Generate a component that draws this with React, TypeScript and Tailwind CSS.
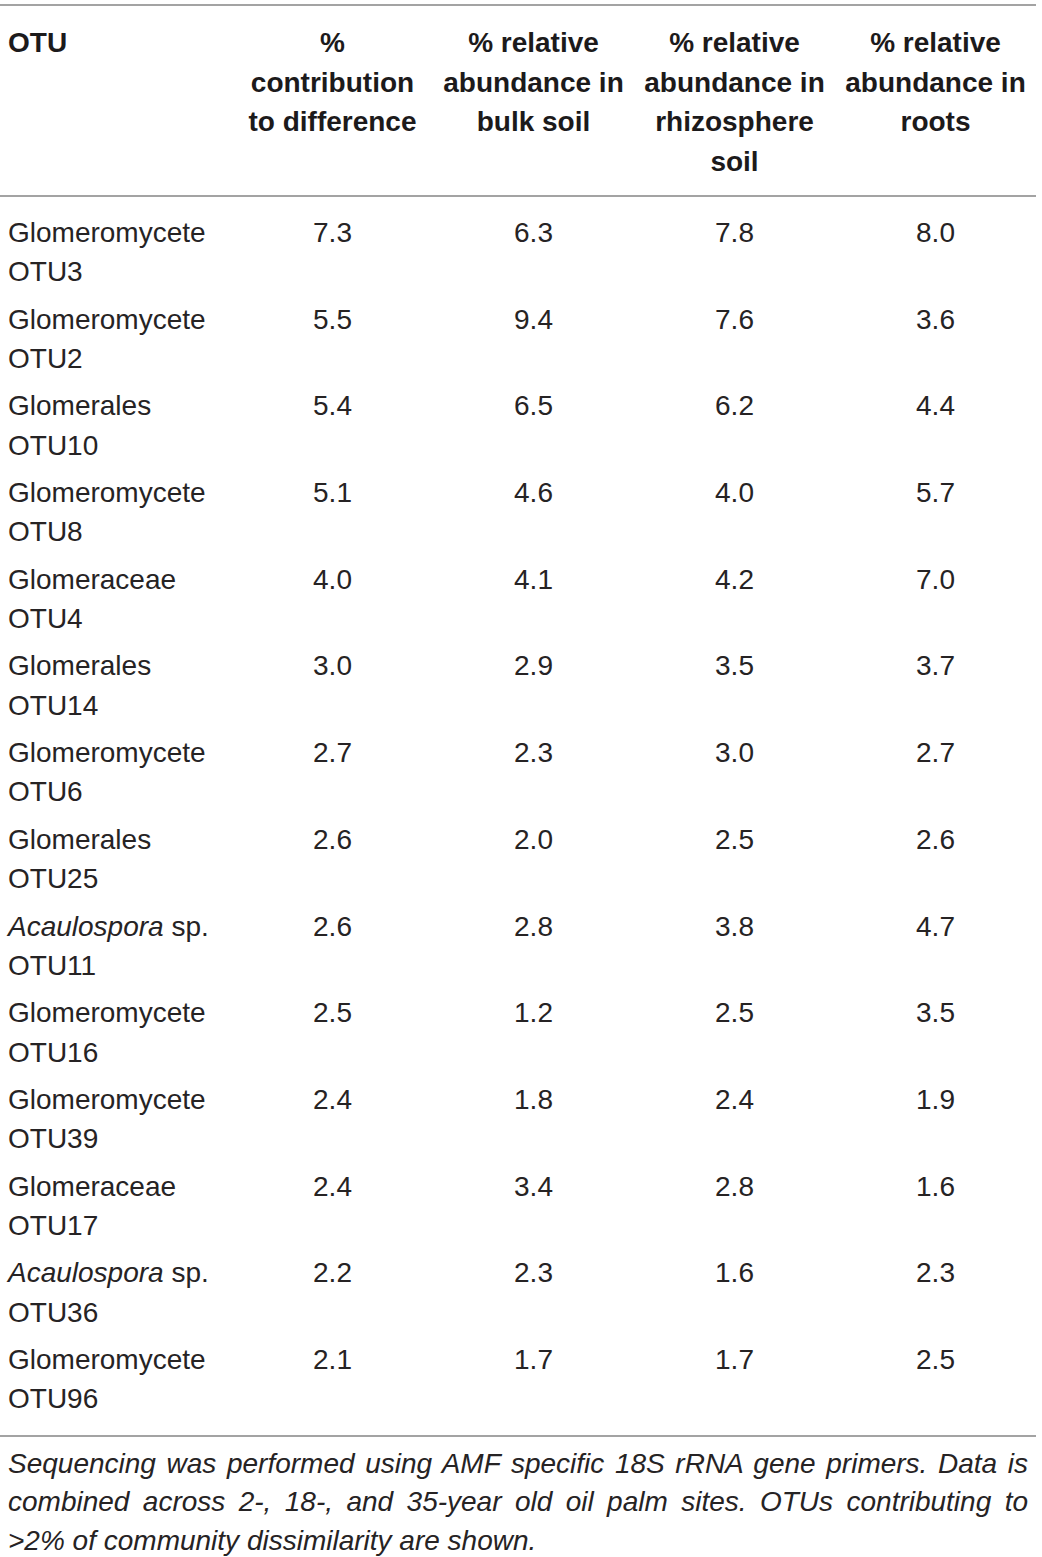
const rows: { name: string; italic?: boolean; otu: string; vals: string[] }[] = [
  { name: 'Glomeromycete', otu: 'OTU3', vals: ['7.3', '6.3', '7.8', '8.0'] },
  { name: 'Glomeromycete', otu: 'OTU2', vals: ['5.5', '9.4', '7.6', '3.6'] },
  { name: 'Glomerales', otu: 'OTU10', vals: ['5.4', '6.5', '6.2', '4.4'] },
  { name: 'Glomeromycete', otu: 'OTU8', vals: ['5.1', '4.6', '4.0', '5.7'] },
  { name: 'Glomeraceae', otu: 'OTU4', vals: ['4.0', '4.1', '4.2', '7.0'] },
  { name: 'Glomerales', otu: 'OTU14', vals: ['3.0', '2.9', '3.5', '3.7'] },
  { name: 'Glomeromycete', otu: 'OTU6', vals: ['2.7', '2.3', '3.0', '2.7'] },
  { name: 'Glomerales', otu: 'OTU25', vals: ['2.6', '2.0', '2.5', '2.6'] },
  { name: 'Acaulospora', italic: true, otu: 'OTU11', vals: ['2.6', '2.8', '3.8', '4.7'] },
  { name: 'Glomeromycete', otu: 'OTU16', vals: ['2.5', '1.2', '2.5', '3.5'] },
  { name: 'Glomeromycete', otu: 'OTU39', vals: ['2.4', '1.8', '2.4', '1.9'] },
  { name: 'Glomeraceae', otu: 'OTU17', vals: ['2.4', '3.4', '2.8', '1.6'] },
  { name: 'Acaulospora', italic: true, otu: 'OTU36', vals: ['2.2', '2.3', '1.6', '2.3'] },
  { name: 'Glomeromycete', otu: 'OTU96', vals: ['2.1', '1.7', '1.7', '2.5'] },
];

const headers = [
  '% contribution to difference',
  '% relative abundance in bulk soil',
  '% relative abundance in rhizosphere soil',
  '% relative abundance in roots',
];

const cols = 'grid grid-cols-[232px_201px_201px_201px_201px]';

export default function App() {
  return (
    <div
      className="w-[1042px] min-h-[1557px] bg-white text-[#262324]"
      style={{ fontFamily: '"Liberation Sans", Arial, sans-serif' }}
    >
      <div className="w-[1036px] pt-[4px]">
        {/* header */}
        <div className={`${cols} border-t-2 border-b-2 border-[#a3a3a3] pt-[17px] pb-[14px] text-[28px] font-bold leading-[39.5px] text-[#1c1a1b]`}>
          <div className="px-[8px]">OTU</div>
          {headers.map((h) => (
            <div key={h} className="px-[4px] text-center">
              {h}
            </div>
          ))}
        </div>

        {/* body */}
        <div className="pt-[12px] pb-[12px] text-[28px] leading-[39.35px]">
          {rows.map((r) => (
            <div key={r.otu} className={`${cols} py-[4px]`}>
              <div className="px-[8px]">
                {r.italic ? (
                  <>
                    <i>{r.name}</i> sp.
                  </>
                ) : (
                  r.name
                )}
                <br />
                {r.otu}
              </div>
              {r.vals.map((v, i) => (
                <div key={i} className="text-center">
                  {v}
                </div>
              ))}
            </div>
          ))}
        </div>

        {/* footnote */}
        <div className="border-t-2 border-[#a3a3a3] px-[8px] pt-[8px] text-[28px] italic leading-[38.5px]">
          <div className="text-justify [text-align-last:justify]">
            Sequencing was performed using AMF specific 18S rRNA gene primers. Data is
          </div>
          <div className="text-justify [text-align-last:justify]">
            combined across 2-, 18-, and 35-year old oil palm sites. OTUs contributing to
          </div>
          <div>&gt;2% of community dissimilarity are shown.</div>
        </div>
      </div>
    </div>
  );
}
